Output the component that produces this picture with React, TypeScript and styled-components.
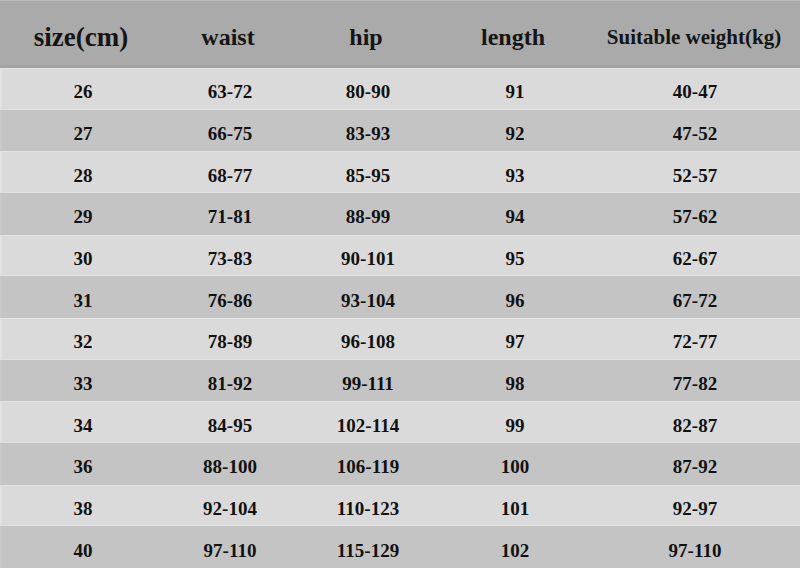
import React from "react";
import styled, { createGlobalStyle } from "styled-components";

const GlobalStyle = createGlobalStyle`
  html, body {
    margin: 0;
    padding: 0;
    background: #c4c4c4;
  }
  body {
    font-family: "Liberation Serif", "Times New Roman", serif;
    color: #111;
  }
`;

const Chart = styled.div`
  width: 800px;
  height: 568px;
  display: flex;
  flex-direction: column;
  overflow: hidden;
`;

const columns = "162px 132px 144px 150px 1fr";

const HeaderRow = styled.div`
  display: grid;
  grid-template-columns: ${columns};
  align-items: center;
  height: 68px;
  box-sizing: border-box;
  padding-top: 8px;
  background: #aaaaaa;
  border-top: 1px solid #bdbdbd;
  border-bottom: 3px solid #a2a2a2;
`;

const HeaderCell = styled.div<{ size?: number }>`
  text-align: center;
  font-weight: bold;
  font-size: ${(p) => p.size ?? 24}px;
  color: #151515;
`;

const Body = styled.div`
  flex: 1;
  display: grid;
  grid-auto-rows: 1fr;
`;

const Row = styled.div<{ light: boolean }>`
  display: grid;
  grid-template-columns: ${columns};
  align-items: center;
  box-sizing: border-box;
  padding-top: 7px;
  background: ${(p) => (p.light ? "#dadada" : "#c4c4c4")};
  border-top: 1px solid ${(p) => (p.light ? "#e3e3e3" : "#c4c4c4")};
  border-bottom: 1px solid ${(p) => (p.light ? "#e0e0e0" : "#c4c4c4")};
  border-left: 2px solid ${(p) => (p.light ? "#e2e2e2" : "#c9c9c9")};
`;

const Cell = styled.div`
  text-align: center;
  font-weight: bold;
  font-size: 19px;
  color: #111;
`;

const sizes: string[][] = [
  ["26", "63-72", "80-90", "91", "40-47"],
  ["27", "66-75", "83-93", "92", "47-52"],
  ["28", "68-77", "85-95", "93", "52-57"],
  ["29", "71-81", "88-99", "94", "57-62"],
  ["30", "73-83", "90-101", "95", "62-67"],
  ["31", "76-86", "93-104", "96", "67-72"],
  ["32", "78-89", "96-108", "97", "72-77"],
  ["33", "81-92", "99-111", "98", "77-82"],
  ["34", "84-95", "102-114", "99", "82-87"],
  ["36", "88-100", "106-119", "100", "87-92"],
  ["38", "92-104", "110-123", "101", "92-97"],
  ["40", "97-110", "115-129", "102", "97-110"],
];

const App: React.FC = () => {
  return (
    <>
      <GlobalStyle />
      <Chart>
        <HeaderRow>
          <HeaderCell size={27}>size(cm)</HeaderCell>
          <HeaderCell>waist</HeaderCell>
          <HeaderCell>hip</HeaderCell>
          <HeaderCell>length</HeaderCell>
          <HeaderCell size={21}>Suitable weight(kg)</HeaderCell>
        </HeaderRow>
        <Body>
          {sizes.map((row, i) => (
            <Row key={row[0]} light={i % 2 === 0}>
              {row.map((value, j) => (
                <Cell key={j}>{value}</Cell>
              ))}
            </Row>
          ))}
        </Body>
      </Chart>
    </>
  );
};

export default App;
